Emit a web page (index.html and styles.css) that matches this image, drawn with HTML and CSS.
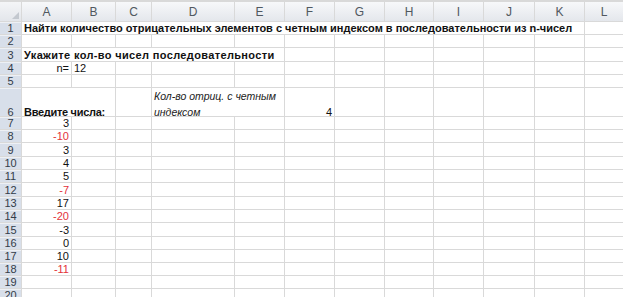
FILE: index.html
```html
<!DOCTYPE html>
<html lang="ru">
<head>
  <meta charset="UTF-8">
  <meta name="viewport" content="width=device-width, initial-scale=1.0">
  <title>Книга1</title>
  <link rel="stylesheet" href="styles.css">
</head>
<body>
  <div id="sheet" class="sheet"></div>

  <script>
    const COLS = ['A', 'B', 'C', 'D', 'E', 'F', 'G', 'H', 'I', 'J', 'K', 'L'];
    const ROW_COUNT = 20;
    const TALL_ROW = 6;

    // filled cells, keyed by address; span = how many columns the text covers
    const cells = {
      A1: { text: 'Найти количество отрицательных элементов с четным индексом в последовательности из n-чисел', span: 11, cls: 'bold' },
      A3: { text: 'Укажите кол-во чисел последовательности', span: 5, cls: 'bold wide' },
      A4: { text: 'n=', cls: 'right' },
      B4: { text: '12' },
      A6: { text: 'Введите числа:', span: 2, cls: 'bold tight' },
      D6: { text: 'Кол-во отриц. с четным\nиндексом', span: 2, cls: 'italic wrap' },
      F6: { text: '4', cls: 'right' }
    };

    // the sequence, negatives on even positions are highlighted
    const numbers = [3, -10, 3, 4, 5, -7, 17, -20, -3, 0, 10, -11];
    numbers.forEach((n, i) => {
      const even = (i + 1) % 2 === 0;
      cells['A' + (i + 7)] = { text: String(n), cls: 'right' + (n < 0 && even ? ' red' : '') };
    });

    const sheet = document.getElementById('sheet');

    function addCell(cls, text, span) {
      const div = document.createElement('div');
      div.className = cls;
      if (text) div.textContent = text;
      if (span > 1) div.style.gridColumn = 'span ' + span;
      sheet.appendChild(div);
    }

    addCell('corner');
    COLS.forEach(c => addCell('col-head', c));

    for (let r = 1; r <= ROW_COUNT; r++) {
      const rowCls = r === TALL_ROW ? ' tall' : '';
      addCell('row-head' + rowCls, String(r));
      for (let c = 0; c < COLS.length; c++) {
        const cell = cells[COLS[c] + r];
        if (cell) {
          addCell('cell' + rowCls + ' ' + (cell.cls || ''), cell.text, cell.span);
          c += (cell.span || 1) - 1;
        } else {
          addCell('cell');
        }
      }
    }
  </script>
</body>
</html>
```

FILE: styles.css
```css
body {
  margin: 0;
  font-family: "Liberation Sans", Arial, sans-serif;
  background-color: #ffffff;
  overflow: hidden;
}
.sheet {
  display: grid;
  grid-template-columns: 21px 49px 43px 35px 82px 49px 49px 49px 48px 49px 50px 49px 1fr;
  grid-template-rows: 19px 12px 12px 13px 12px 12px 28px 12px 12px 13px 12px 12px 13px 12px 12px 13px 12px 12px 12px 12px 12px;
  gap: 1px;
  width: 623px;
  height: 297px;
  padding-top: 2px;
  box-sizing: border-box;
  background-color: #d9d9d9;
}
.corner {
  position: relative;
  background: linear-gradient(#f4f5f7, #e3e6eb);
}
.corner::after {
  content: "";
  position: absolute;
  right: 2px;
  bottom: 2px;
  border-left: 7px solid transparent;
  border-bottom: 7px solid #c3c8cf;
}
.col-head {
  display: flex;
  align-items: center;
  justify-content: center;
  background: linear-gradient(#f7f8fa, #e4e7ec);
  color: #505860;
  font-size: 12px;
}
.row-head {
  display: flex;
  align-items: flex-end;
  justify-content: center;
  background-color: #d8dfea;
  box-shadow: inset 0 1px 0 #edf0f5;
  color: #333c48;
  font-size: 11px;
  line-height: 12px;
}
.cell {
  display: flex;
  align-items: flex-end;
  padding: 0 2px;
  background-color: #ffffff;
  color: #111111;
  font-size: 11px;
  line-height: 12px;
  white-space: nowrap;
}
/* text in the tall row sits a bit lower */
.tall {
  line-height: 8px;
}
.bold {
  font-weight: bold;
}
.wide {
  letter-spacing: 0.35px;
}
.tight {
  letter-spacing: -0.3px;
}
.right {
  justify-content: flex-end;
}
.red {
  color: #e3323a;
}
.italic {
  font-style: italic;
  font-size: 10.5px;
  color: #222222;
}
.wrap {
  align-items: flex-start;
  white-space: pre-line;
  line-height: 16px;
}
```
